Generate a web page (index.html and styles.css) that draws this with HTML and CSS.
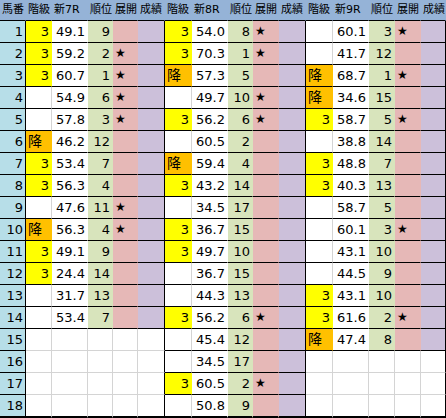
FILE: index.html
```html
<!DOCTYPE html>
<html lang="ja">
<head>
    <meta charset="UTF-8">
    <meta name="viewport" content="width=device-width, initial-scale=1.0">
    <title>新馬戦 成績表</title>
    <link rel="stylesheet" href="styles.css">
</head>
<body>
    <div class="sheet">
        <!-- header -->
        <div class="row head">
            <div class="cell">馬番</div>
            <div class="cell">階級</div><div class="cell">新7R</div><div class="cell">順位</div><div class="cell">展開</div><div class="cell">成績</div>
            <div class="cell">階級</div><div class="cell">新8R</div><div class="cell">順位</div><div class="cell">展開</div><div class="cell">成績</div>
            <div class="cell">階級</div><div class="cell">新9R</div><div class="cell">順位</div><div class="cell">展開</div><div class="cell">成績</div>
        </div>

        <div class="row">
            <div class="cell no">1</div>
            <div class="cell grade up">3</div><div class="cell time">49.1</div><div class="cell rank">9</div><div class="cell pace"></div><div class="cell result"></div>
            <div class="cell grade up">3</div><div class="cell time">54.0</div><div class="cell rank">8</div><div class="cell pace">★</div><div class="cell result"></div>
            <div class="cell grade"></div><div class="cell time">60.1</div><div class="cell rank">3</div><div class="cell pace">★</div><div class="cell result"></div>
        </div>
        <div class="row">
            <div class="cell no">2</div>
            <div class="cell grade up">3</div><div class="cell time">59.2</div><div class="cell rank">2</div><div class="cell pace">★</div><div class="cell result"></div>
            <div class="cell grade up">3</div><div class="cell time">70.3</div><div class="cell rank">1</div><div class="cell pace">★</div><div class="cell result"></div>
            <div class="cell grade"></div><div class="cell time">41.7</div><div class="cell rank">12</div><div class="cell pace"></div><div class="cell result"></div>
        </div>
        <div class="row">
            <div class="cell no">3</div>
            <div class="cell grade up">3</div><div class="cell time">60.7</div><div class="cell rank">1</div><div class="cell pace">★</div><div class="cell result"></div>
            <div class="cell grade down">降</div><div class="cell time">57.3</div><div class="cell rank">5</div><div class="cell pace"></div><div class="cell result"></div>
            <div class="cell grade down">降</div><div class="cell time">68.7</div><div class="cell rank">1</div><div class="cell pace">★</div><div class="cell result"></div>
        </div>
        <div class="row">
            <div class="cell no">4</div>
            <div class="cell grade"></div><div class="cell time">54.9</div><div class="cell rank">6</div><div class="cell pace">★</div><div class="cell result"></div>
            <div class="cell grade"></div><div class="cell time">49.7</div><div class="cell rank">10</div><div class="cell pace">★</div><div class="cell result"></div>
            <div class="cell grade down">降</div><div class="cell time">34.6</div><div class="cell rank">15</div><div class="cell pace"></div><div class="cell result"></div>
        </div>
        <div class="row">
            <div class="cell no">5</div>
            <div class="cell grade"></div><div class="cell time">57.8</div><div class="cell rank">3</div><div class="cell pace">★</div><div class="cell result"></div>
            <div class="cell grade up">3</div><div class="cell time">56.2</div><div class="cell rank">6</div><div class="cell pace">★</div><div class="cell result"></div>
            <div class="cell grade up">3</div><div class="cell time">58.7</div><div class="cell rank">5</div><div class="cell pace">★</div><div class="cell result"></div>
        </div>
        <div class="row">
            <div class="cell no">6</div>
            <div class="cell grade down">降</div><div class="cell time">46.2</div><div class="cell rank">12</div><div class="cell pace"></div><div class="cell result"></div>
            <div class="cell grade"></div><div class="cell time">60.5</div><div class="cell rank">2</div><div class="cell pace"></div><div class="cell result"></div>
            <div class="cell grade"></div><div class="cell time">38.8</div><div class="cell rank">14</div><div class="cell pace"></div><div class="cell result"></div>
        </div>
        <div class="row">
            <div class="cell no">7</div>
            <div class="cell grade up">3</div><div class="cell time">53.4</div><div class="cell rank">7</div><div class="cell pace"></div><div class="cell result"></div>
            <div class="cell grade down">降</div><div class="cell time">59.4</div><div class="cell rank">4</div><div class="cell pace"></div><div class="cell result"></div>
            <div class="cell grade up">3</div><div class="cell time">48.8</div><div class="cell rank">7</div><div class="cell pace"></div><div class="cell result"></div>
        </div>
        <div class="row">
            <div class="cell no">8</div>
            <div class="cell grade up">3</div><div class="cell time">56.3</div><div class="cell rank">4</div><div class="cell pace"></div><div class="cell result"></div>
            <div class="cell grade up">3</div><div class="cell time">43.2</div><div class="cell rank">14</div><div class="cell pace"></div><div class="cell result"></div>
            <div class="cell grade up">3</div><div class="cell time">40.3</div><div class="cell rank">13</div><div class="cell pace"></div><div class="cell result"></div>
        </div>
        <div class="row">
            <div class="cell no">9</div>
            <div class="cell grade"></div><div class="cell time">47.6</div><div class="cell rank">11</div><div class="cell pace">★</div><div class="cell result"></div>
            <div class="cell grade"></div><div class="cell time">34.5</div><div class="cell rank">17</div><div class="cell pace"></div><div class="cell result"></div>
            <div class="cell grade"></div><div class="cell time">58.7</div><div class="cell rank">5</div><div class="cell pace"></div><div class="cell result"></div>
        </div>
        <div class="row">
            <div class="cell no">10</div>
            <div class="cell grade down">降</div><div class="cell time">56.3</div><div class="cell rank">4</div><div class="cell pace">★</div><div class="cell result"></div>
            <div class="cell grade up">3</div><div class="cell time">36.7</div><div class="cell rank">15</div><div class="cell pace"></div><div class="cell result"></div>
            <div class="cell grade"></div><div class="cell time">60.1</div><div class="cell rank">3</div><div class="cell pace">★</div><div class="cell result"></div>
        </div>
        <div class="row">
            <div class="cell no">11</div>
            <div class="cell grade up">3</div><div class="cell time">49.1</div><div class="cell rank">9</div><div class="cell pace"></div><div class="cell result"></div>
            <div class="cell grade up">3</div><div class="cell time">49.7</div><div class="cell rank">10</div><div class="cell pace"></div><div class="cell result"></div>
            <div class="cell grade"></div><div class="cell time">43.1</div><div class="cell rank">10</div><div class="cell pace"></div><div class="cell result"></div>
        </div>
        <div class="row">
            <div class="cell no">12</div>
            <div class="cell grade up">3</div><div class="cell time">24.4</div><div class="cell rank">14</div><div class="cell pace"></div><div class="cell result"></div>
            <div class="cell grade"></div><div class="cell time">36.7</div><div class="cell rank">15</div><div class="cell pace"></div><div class="cell result"></div>
            <div class="cell grade"></div><div class="cell time">44.5</div><div class="cell rank">9</div><div class="cell pace"></div><div class="cell result"></div>
        </div>
        <div class="row">
            <div class="cell no">13</div>
            <div class="cell grade"></div><div class="cell time">31.7</div><div class="cell rank">13</div><div class="cell pace"></div><div class="cell result"></div>
            <div class="cell grade"></div><div class="cell time">44.3</div><div class="cell rank">13</div><div class="cell pace"></div><div class="cell result"></div>
            <div class="cell grade up">3</div><div class="cell time">43.1</div><div class="cell rank">10</div><div class="cell pace"></div><div class="cell result"></div>
        </div>
        <div class="row">
            <div class="cell no">14</div>
            <div class="cell grade"></div><div class="cell time">53.4</div><div class="cell rank">7</div><div class="cell pace"></div><div class="cell result"></div>
            <div class="cell grade up">3</div><div class="cell time">56.2</div><div class="cell rank">6</div><div class="cell pace">★</div><div class="cell result"></div>
            <div class="cell grade up">3</div><div class="cell time">61.6</div><div class="cell rank">2</div><div class="cell pace">★</div><div class="cell result"></div>
        </div>
        <div class="row">
            <div class="cell no">15</div>
            <div class="cell blank"></div><div class="cell blank"></div><div class="cell blank"></div><div class="cell blank"></div><div class="cell blank end"></div>
            <div class="cell grade"></div><div class="cell time">45.4</div><div class="cell rank">12</div><div class="cell pace"></div><div class="cell result"></div>
            <div class="cell grade down">降</div><div class="cell time">47.4</div><div class="cell rank">8</div><div class="cell pace"></div><div class="cell result"></div>
        </div>
        <div class="row">
            <div class="cell no">16</div>
            <div class="cell blank"></div><div class="cell blank"></div><div class="cell blank"></div><div class="cell blank"></div><div class="cell blank end"></div>
            <div class="cell grade"></div><div class="cell time">34.5</div><div class="cell rank">17</div><div class="cell pace"></div><div class="cell result"></div>
            <div class="cell blank"></div><div class="cell blank"></div><div class="cell blank"></div><div class="cell blank"></div><div class="cell blank end"></div>
        </div>
        <div class="row">
            <div class="cell no">17</div>
            <div class="cell blank"></div><div class="cell blank"></div><div class="cell blank"></div><div class="cell blank"></div><div class="cell blank end"></div>
            <div class="cell grade up">3</div><div class="cell time">60.5</div><div class="cell rank">2</div><div class="cell pace">★</div><div class="cell result"></div>
            <div class="cell blank"></div><div class="cell blank"></div><div class="cell blank"></div><div class="cell blank"></div><div class="cell blank end"></div>
        </div>
        <div class="row last">
            <div class="cell no">18</div>
            <div class="cell blank"></div><div class="cell blank"></div><div class="cell blank"></div><div class="cell blank"></div><div class="cell blank end"></div>
            <div class="cell grade"></div><div class="cell time">50.8</div><div class="cell rank">9</div><div class="cell pace"></div><div class="cell result"></div>
            <div class="cell blank"></div><div class="cell blank"></div><div class="cell blank"></div><div class="cell blank"></div><div class="cell blank end"></div>
        </div>
    </div>
</body>
</html>
```

FILE: styles.css
```css
body {
    margin: 0;
    background: white;
    font-family: 'DejaVu Sans', 'Noto Sans CJK JP', sans-serif;
    font-size: 13px;
    color: #000;
}
.sheet {
    width: 446px;
}
.row {
    display: grid;
    grid-template-columns: 26px 26px 36px 25px 25px 27px 27px 36px 25px 26px 27px 27px 36px 26px 26px 25px;
    height: 22px;
}
.cell {
    box-sizing: border-box;
    height: 22px;
    line-height: 21px;
    padding: 0 2px;
    border-right: 1px solid #d4d4d4;
    border-bottom: 1px solid #000;
    white-space: nowrap;
    overflow: hidden;
    text-align: right;
}

/* header */
.head {
    height: 21px;
}
.head .cell {
    height: 21px;
    line-height: 20px;
    text-align: left;
    padding: 0 0 0 2px;
    background: #95b3d7;
    border-right-color: transparent;
    font-size: 11px;
}

/* columns */
.no {
    background: #b7dee8;
    border-right-color: #000 !important;
}
.grade {
    background: white;
}
.grade.up {
    background: #ffff00;
    border-right-color: transparent;
}
.grade.down {
    background: #ffc000;
    border-right-color: transparent;
    text-align: left;
    font-size: 14px;
}
.time {
    background: white;
    border-right-color: transparent;
}
.rank {
    background: #d8e4bc;
    border-right-color: transparent;
}
.pace {
    background: #e6b8b7;
    border-right-color: transparent;
    text-align: left;
    font-size: 12px;
}
.result {
    background: #ccc0da;
    border-right-color: #000;
}
.blank {
    background: white;
    border-bottom-color: #d4d4d4;
}
.blank.end {
    border-right-color: #000;
}

/* thick bottom edge */
.last {
    height: 23px;
}
.last .cell {
    height: 23px;
    border-bottom: 2px solid #000;
}
```
